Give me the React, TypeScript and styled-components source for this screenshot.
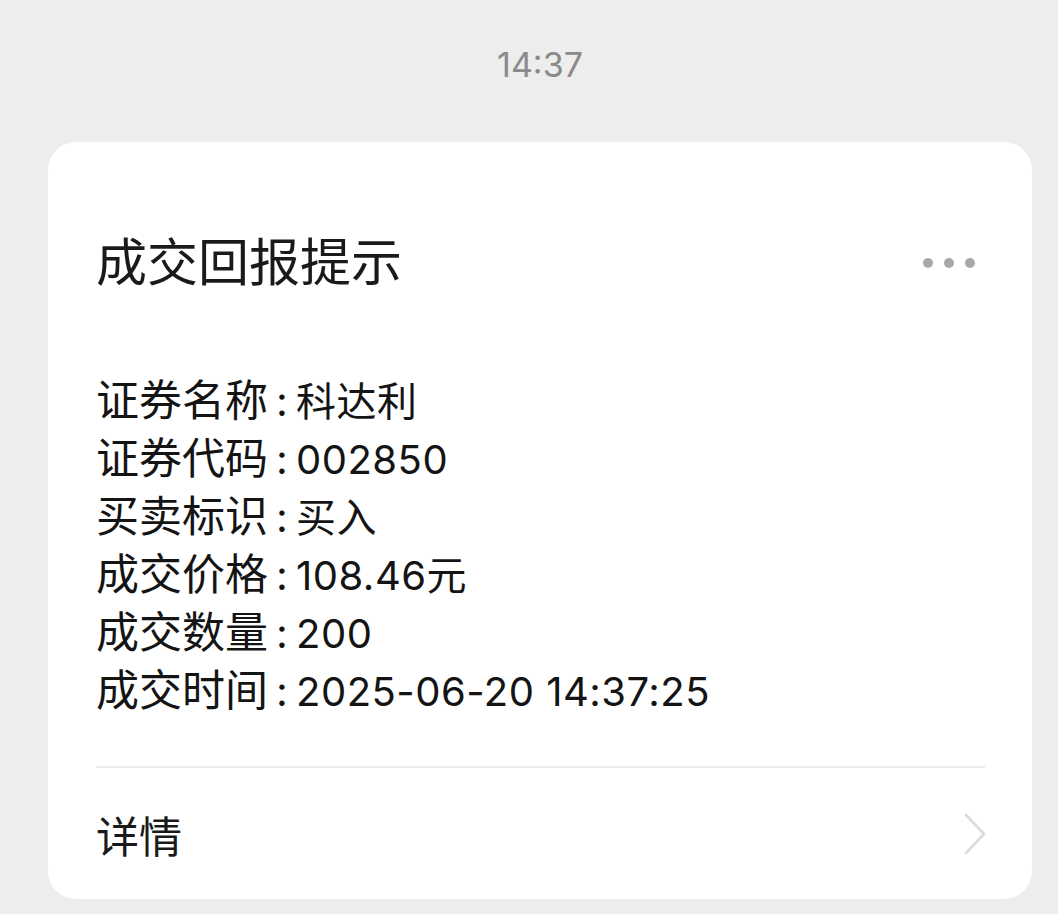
import styled, { createGlobalStyle } from 'styled-components';

const GlobalStyle = createGlobalStyle`
  html, body {
    margin: 0;
    padding: 0;
    background: #ededed;
  }
  body {
    font-family: 'Inter', 'Noto Sans CJK SC', sans-serif;
  }
`;

const rows = [
  { label: '证券名称', value: '科达利' },
  { label: '证券代码', value: '002850' },
  { label: '买卖标识', value: '买入' },
  { label: '成交价格', value: '108.46元' },
  { label: '成交数量', value: '200' },
  { label: '成交时间', value: '2025-06-20 14:37:25' },
];

export default function App() {
  return (
    <>
      <GlobalStyle />
      <SPage>
        <STime>14:37</STime>
        <SCard>
          <SHeader>
            <STitle>成交回报提示</STitle>
            <SMore>
              <span />
              <span />
              <span />
            </SMore>
          </SHeader>
          <SInfo>
            {rows.map((r) => (
              <SLine key={r.label}>
                <SLabel>{r.label}</SLabel>
                <SColon>:</SColon>
                <SValue>{r.value}</SValue>
              </SLine>
            ))}
          </SInfo>
          <SFooter>
            <span>详情</span>
            <svg width="24" height="42" viewBox="0 0 24 42" fill="none">
              <polyline
                points="3,2 21,21 3,40"
                stroke="#dcdcdc"
                strokeWidth="2.6"
                strokeLinecap="round"
                strokeLinejoin="round"
              />
            </svg>
          </SFooter>
        </SCard>
      </SPage>
    </>
  );
}

const SPage = styled.div`
  min-height: 914px;
  padding: 0 26px 0 48px;
  box-sizing: border-box;
  display: flex;
  flex-direction: column;
`;

const STime = styled.div`
  height: 142px;
  display: flex;
  justify-content: center;
  align-items: center;
  padding-bottom: 14px;
  box-sizing: border-box;
  font-size: 34px;
  color: #8a8a8a;
`;

const SCard = styled.div`
  background: #fff;
  border-radius: 28px;
  padding: 91px 47px 0 48px;
  display: flex;
  flex-direction: column;
`;

const SHeader = styled.div`
  display: flex;
  align-items: center;
  justify-content: space-between;
  height: 60px;
`;

const STitle = styled.div`
  font-size: 51px;
  line-height: 60px;
  color: #1a1a1a;
`;

const SMore = styled.div`
  display: flex;
  gap: 11px;
  margin-right: 10px;
  span {
    width: 10px;
    height: 10px;
    border-radius: 50%;
    background: #a8a8a8;
  }
`;

const SInfo = styled.div`
  display: flex;
  flex-direction: column;
  margin-top: 78px;
  padding-bottom: 47px;
  border-bottom: 2px solid #ececec;
`;

const SLine = styled.div`
  height: 58px;
  line-height: 58px;
  color: #141414;
  white-space: pre;
`;

const SLabel = styled.span`
  font-size: 43px;
`;

const SColon = styled.span`
  display: inline-block;
  width: 28px;
  text-align: center;
  font-size: 41px;
`;

const SValue = styled.span`
  font-size: 40px;
  letter-spacing: 0.5px;
`;

const SFooter = styled.div`
  height: 131px;
  display: flex;
  align-items: center;
  justify-content: space-between;
  font-size: 43px;
  color: #1a1a1a;
  svg {
    margin-right: -2px;
  }
`;
